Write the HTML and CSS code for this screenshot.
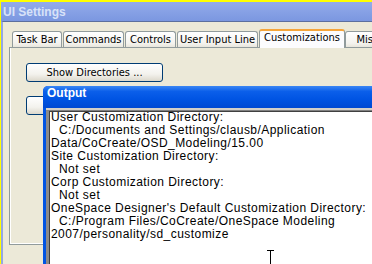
FILE: index.html
```html
<!doctype html>
<html lang="en">
	<head>
		<title>UI Settings</title>
		<meta charset="utf-8" />
		<link rel="stylesheet" href="styles.css">
	</head>

	<body>
        <div class="screen">

            <div class="settings">
                <div class="settings-title">UI Settings</div>
                <div class="settings-body">
                    <div class="tabs">
                        <div class="tab tab-taskbar">Task Bar</div>
                        <div class="tab tab-commands">Commands</div>
                        <div class="tab tab-controls">Controls</div>
                        <div class="tab tab-input">User Input Line</div>
                        <div class="tab tab-active">Customizations</div>
                        <div class="tab tab-misc">Misc</div>
                    </div>
                    <div class="panel">
                        <button class="btn">Show Directories ...</button>
                        <button class="btn">&nbsp;</button>
                    </div>
                </div>
            </div>

            <div class="output">
                <div class="output-title">Output</div>
                <div class="output-frame">
                    <div class="output-text">
                        <div class="line">User Customization Directory:</div>
                        <div class="line indent">C:/Documents and Settings/clausb/Application</div>
                        <div class="line">Data/CoCreate/OSD_Modeling/15.00</div>
                        <div class="line">Site Customization Directory:</div>
                        <div class="line indent">Not set</div>
                        <div class="line">Corp Customization Directory:</div>
                        <div class="line indent">Not set</div>
                        <div class="line">OneSpace Designer's Default Customization Directory:</div>
                        <div class="line indent">C:/Program Files/CoCreate/OneSpace Modeling</div>
                        <div class="line">2007/personality/sd_customize</div>
                    </div>
                </div>
            </div>

            <!-- text cursor -->
            <svg class="cursor" width="8" height="14" viewBox="0 0 8 14">
                <path d="M0 0.5h7M3.5 0v14" stroke="#000" stroke-width="1" fill="none" />
            </svg>
        </div>
	</body>
</html>
```

FILE: styles.css
```css
body {
    margin: 0;
    padding: 0;
    overflow: hidden;
}

.screen
{
    position: relative;
    width: 372px;
    height: 264px;
    overflow: hidden;
    box-sizing: border-box;
    background: #ffff00;
    padding: 2px 0 0 1px;
}

.settings
{
    display: flex;
    flex-direction: column;
    width: 420px;
    height: 100%;
}

.settings-title
{
    height: 16px;
    padding: 3px 0 0 2px;
    line-height: 16px;
    background: linear-gradient(#93abea, #7b97e0);
    color: #d8e2f8;
    font: bold 12px "Liberation Sans", sans-serif;
}

.settings-body
{
    flex: 1;
    background: #ece9d8;
    border-left: 2px solid #94a8e4;
    border-top: 1px solid #5c6f9e;
    padding: 7px 0 0 6px;
}

.tabs
{
    display: flex;
    align-items: flex-end;
    height: 18px;
    padding-left: 3px;
    font: 11px "DejaVu Sans", sans-serif;
    font-stretch: condensed;
}

.tab
{
    box-sizing: border-box;
    height: 16px;
    margin-right: 1px;
    border: 1px solid #919b9c;
    border-bottom: none;
    border-radius: 3px 3px 0 0;
    background: linear-gradient(#ffffff, #f4f3ee 75%, #e8e6dc);
    text-align: center;
    line-height: 15px;
    color: #000;
    white-space: nowrap;
}

.tab-taskbar { width: 50px; }
.tab-commands { width: 61px; }
.tab-controls { width: 51px; }
.tab-input { width: 81px; }
.tab-misc { width: 45px; }

.tab-active
{
    position: relative;
    width: 86px;
    height: 19px;
    margin: 0 0 -1px 0;
    border-top: 2px solid #f5a53a;
    background: #fcfcfe;
    line-height: 14px;
}

.panel
{
    display: flex;
    flex-direction: column;
    align-items: flex-start;
    gap: 14px;
    height: 181px;
    padding: 15px 0 0 16px;
    border: 1px solid #919b9c;
    border-right: none;
    box-shadow: inset 1px 0 0 #ffffff, inset 0 -1px 0 #ffffff;
}

.btn
{
    width: 137px;
    height: 19px;
    padding: 0;
    border: 1px solid #003c74;
    border-radius: 3px;
    background: linear-gradient(#ffffff, #f3f2ed 60%, #dcd8cc);
    font: 11px "DejaVu Sans", sans-serif;
    font-stretch: condensed;
    color: #000;
}

.output
{
    position: absolute;
    left: 43px;
    top: 86px;
    width: 340px;
    height: 190px;
    padding-left: 3px;
    background: #0054e3;
    border-radius: 5px 0 0 0;
}

.output-title
{
    height: 22px;
    margin-left: -3px;
    padding-left: 4px;
    line-height: 22px;
    border-radius: 5px 0 0 0;
    background: linear-gradient(#3a86f4, #0b5fea 25%, #0054e3 60%, #0049d2);
    color: #ffffff;
    font: bold 12px "Liberation Sans", sans-serif;
}

.output-frame
{
    height: 100%;
    padding-top: 2px;
    background: #d4d0c8;
}

.output-text
{
    height: 100%;
    padding: 0 0 0 2px;
    border-top: 1px solid #808080;
    border-left: 3px solid #8a8a8a;
    box-shadow: inset 1px 1px 0 #404040;
    background: #ffffff;
    color: #000;
    font: 12px "Liberation Sans", sans-serif;
    letter-spacing: 0.45px;
    line-height: 13px;
}

.line
{
    white-space: pre;
}

.indent
{
    padding-left: 8px;
}

.cursor
{
    position: absolute;
    left: 267px;
    top: 250px;
}
```
